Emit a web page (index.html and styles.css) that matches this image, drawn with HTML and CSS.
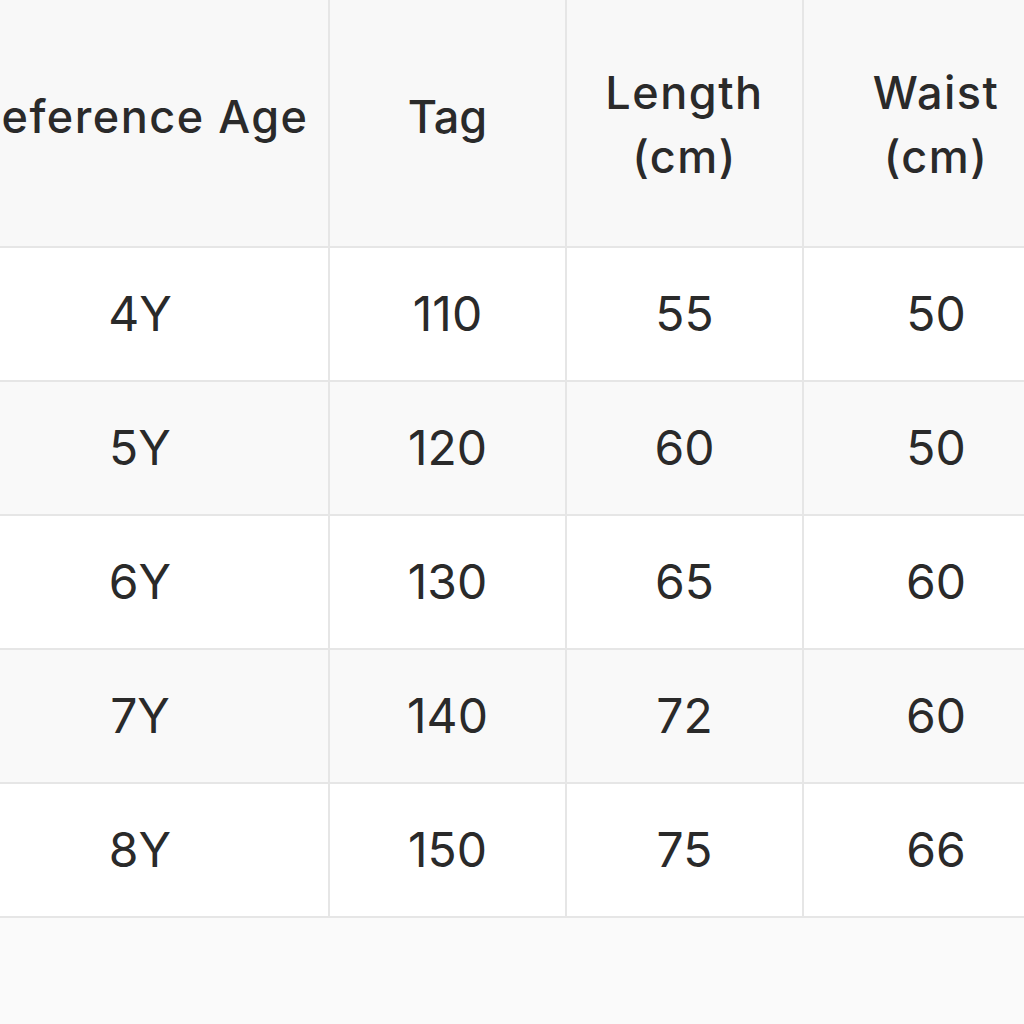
FILE: index.html
```html
<!DOCTYPE html>
<html lang="en">
<head>
<meta charset="utf-8">
<title>Size Chart</title>
<link rel="stylesheet" href="styles.css">
</head>
<body>
<div class="chart">
  <div class="cell head single wide">Reference Age</div>
  <div class="cell head single">Tag</div>
  <div class="cell head double wide">Length<br>(cm)</div>
  <div class="cell head double wide">Waist<br>(cm)</div>

  <div class="cell">4Y</div><div class="cell">110</div><div class="cell">55</div><div class="cell">50</div>
  <div class="cell alt">5Y</div><div class="cell alt">120</div><div class="cell alt">60</div><div class="cell alt">50</div>
  <div class="cell">6Y</div><div class="cell">130</div><div class="cell">65</div><div class="cell">60</div>
  <div class="cell alt">7Y</div><div class="cell alt">140</div><div class="cell alt">72</div><div class="cell alt">60</div>
  <div class="cell">8Y</div><div class="cell">150</div><div class="cell">75</div><div class="cell">66</div>
</div>
</body>
</html>
```

FILE: styles.css
```css
html, body {
  margin: 0;
  padding: 0;
  background: #fafafa;
  overflow: hidden;
}
body {
  width: 1024px;
  height: 1024px;
  font-family: Inter, "Noto Sans", sans-serif;
  color: #2a2a2a;
}
.chart {
  display: grid;
  grid-template-columns: 378px 237px 237px 266px;
  grid-template-rows: 248px repeat(5, 134px);
  margin-left: -48px;
  width: 1118px;
}
.cell {
  display: flex;
  align-items: center;
  justify-content: center;
  text-align: center;
  background: #ffffff;
  border-right: 2px solid #e6e6e6;
  border-bottom: 2px solid #e6e6e6;
  font-size: 48px;
  font-weight: 400;
  line-height: 1;
}
.cell.alt {
  background: #f9f9f9;
}
.cell.head {
  background: #f8f8f8;
  font-size: 45px;
  font-weight: 500;
  line-height: 64px;
}
.cell.head.wide {
  letter-spacing: 1.5px;
}
.cell.head.single {
  padding-bottom: 12px;
}
.cell.head.double {
  padding-top: 4px;
}
```
